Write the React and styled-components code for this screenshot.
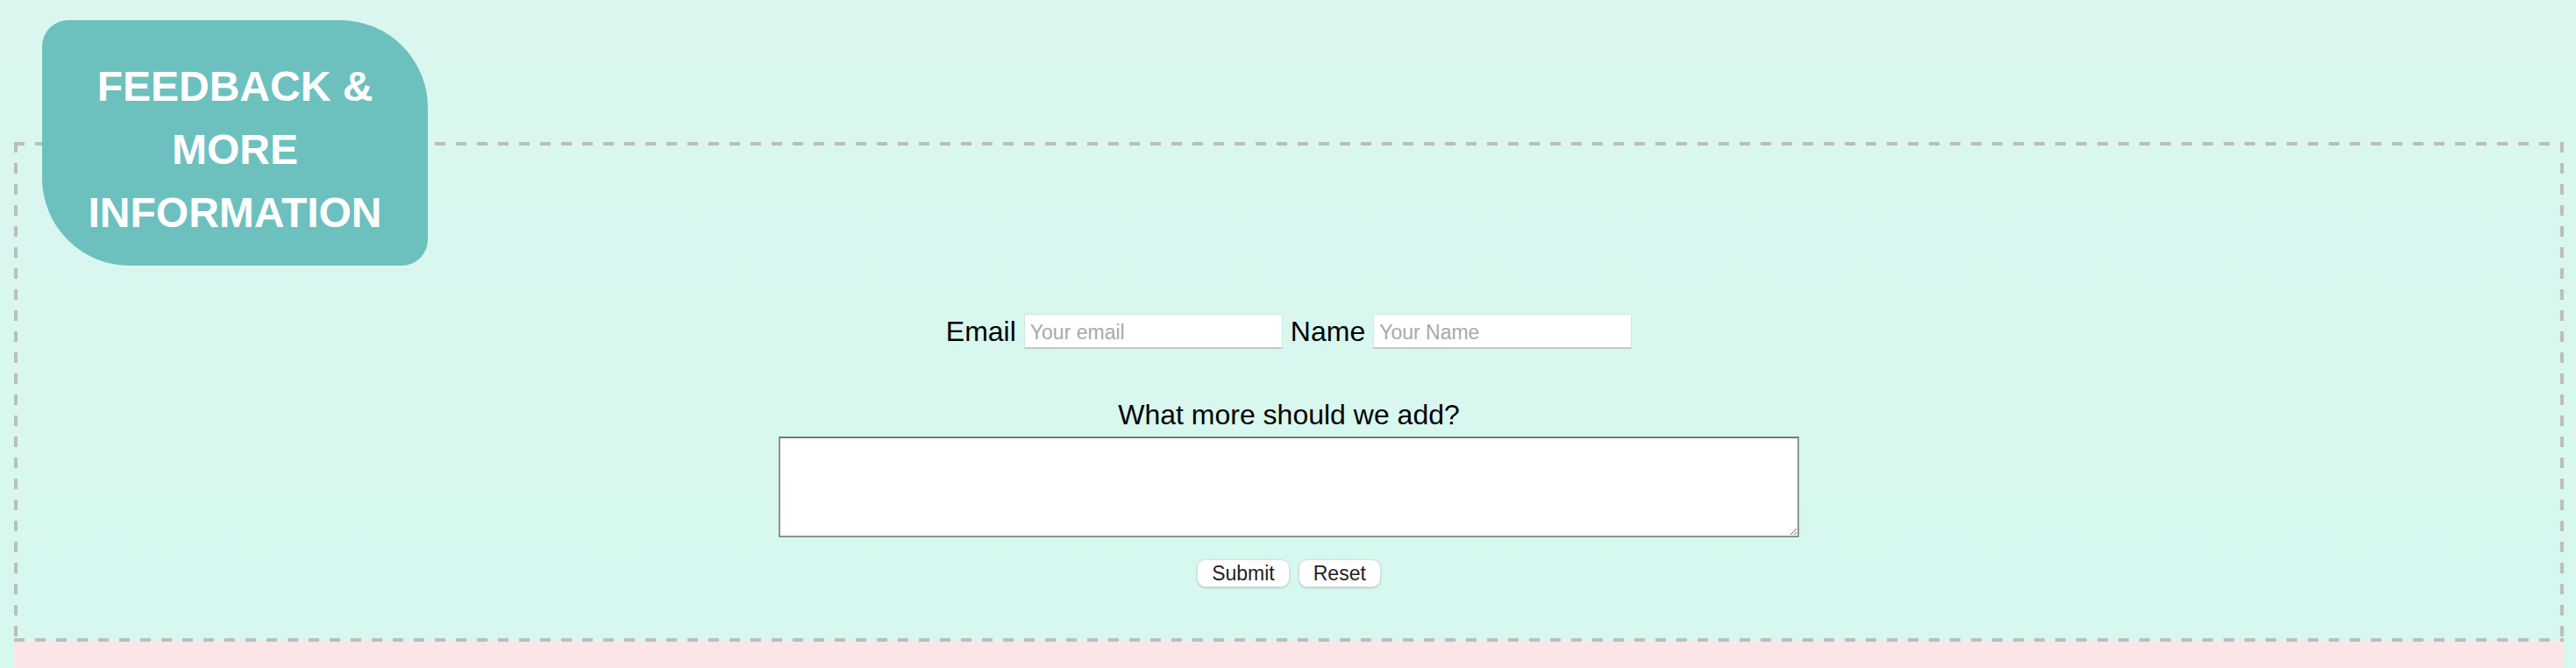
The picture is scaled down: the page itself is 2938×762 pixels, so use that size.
import React from "react";
import styled, { createGlobalStyle } from "styled-components";

const GlobalStyle = createGlobalStyle`
  html, body {
    margin: 0;
    padding: 0;
    background: #d8f7ef;
    font-family: "Liberation Sans", Arial, Helvetica, sans-serif;
  }
  * { box-sizing: border-box; }
`;

const Page = styled.div`
  position: relative;
  padding: 162px 14px 0 16px;
  background: linear-gradient(#daf6ef, #d5f8ef);
`;

const Badge = styled.h2`
  position: absolute;
  top: 23px;
  left: 48px;
  z-index: 2;
  margin: 0;
  width: 440px;
  height: 280px;
  padding-top: 40px;
  background: #6cc1bf;
  border-radius: 30px 100px 30px 100px;
  color: #ffffff;
  font-family: "Liberation Sans", Arial, Helvetica, sans-serif;
  font-size: 48px;
  font-weight: 700;
  line-height: 72px;
  text-align: center;
`;

const dashH = "repeating-linear-gradient(90deg, #bdbdbd 0 12px, transparent 12px 24px)";
const dashV = "repeating-linear-gradient(180deg, #bdbdbd 0 12px, transparent 12px 24px)";

const Box = styled.section`
  padding: 196px 4px 62px;
  background:
    ${dashH} left top / 100% 4px no-repeat,
    ${dashH} left bottom / 100% 4px no-repeat,
    ${dashV} left top / 4px 100% no-repeat,
    ${dashV} right top / 4px 100% no-repeat;
  display: flex;
  flex-direction: column;
  align-items: center;
`;

const Row = styled.div`
  display: flex;
  align-items: center;
  gap: 9px;
`;

const Label = styled.label`
  font-size: 32px;
  line-height: 36px;
  color: #000;
`;

const TextInput = styled.input`
  width: 295px;
  height: 40px;
  padding: 4px 0 0 6px;
  background: #ffffff;
  border: 1px solid #cfe6e1;
  border-bottom: 2px solid #c5c8c7;
  font-family: "Liberation Sans", Arial, Helvetica, sans-serif;
  font-size: 23px;
  outline: none;
  &::placeholder { color: #a9a9a9; }
`;

const Question = styled.label`
  margin-top: 57px;
  font-size: 32px;
  line-height: 36px;
  color: #000;
`;

const TextArea = styled.textarea`
  margin-top: 7px;
  width: 1164px;
  height: 115px;
  background: #ffffff;
  border: 2px solid #929292;
  border-top-color: #767676;
  font-family: "Liberation Mono", monospace;
  font-size: 26px;
  outline: none;
`;

const Buttons = styled.div`
  margin-top: 25px;
  display: flex;
  gap: 10px;
`;

const Button = styled.button`
  height: 32px;
  padding: 0 16px;
  background: #ffffff;
  border: 1px solid #d6dedc;
  border-radius: 10px;
  box-shadow: 0 1px 2px rgba(0, 0, 0, 0.18);
  color: #222;
  font-family: "Liberation Sans", Arial, Helvetica, sans-serif;
  font-size: 23px;
  line-height: 30px;
  cursor: pointer;
`;

const PinkSection = styled.section`
  height: 200px;
  background: #fce5e6;
`;

export default function App() {
  return (
    <>
      <GlobalStyle />
      <Page>
        <Badge>
          FEEDBACK &amp;
          <br />
          MORE
          <br />
          INFORMATION
        </Badge>
        <Box as="form" onSubmit={(e) => e.preventDefault()}>
          <Row>
            <Label htmlFor="email">Email</Label>
            <TextInput id="email" type="email" placeholder="Your email" />
            <Label htmlFor="name">Name</Label>
            <TextInput id="name" type="text" placeholder="Your Name" />
          </Row>
          <Question htmlFor="more">What more should we add?</Question>
          <TextArea id="more" />
          <Buttons>
            <Button type="submit">Submit</Button>
            <Button type="reset">Reset</Button>
          </Buttons>
        </Box>
        <PinkSection />
      </Page>
    </>
  );
}
